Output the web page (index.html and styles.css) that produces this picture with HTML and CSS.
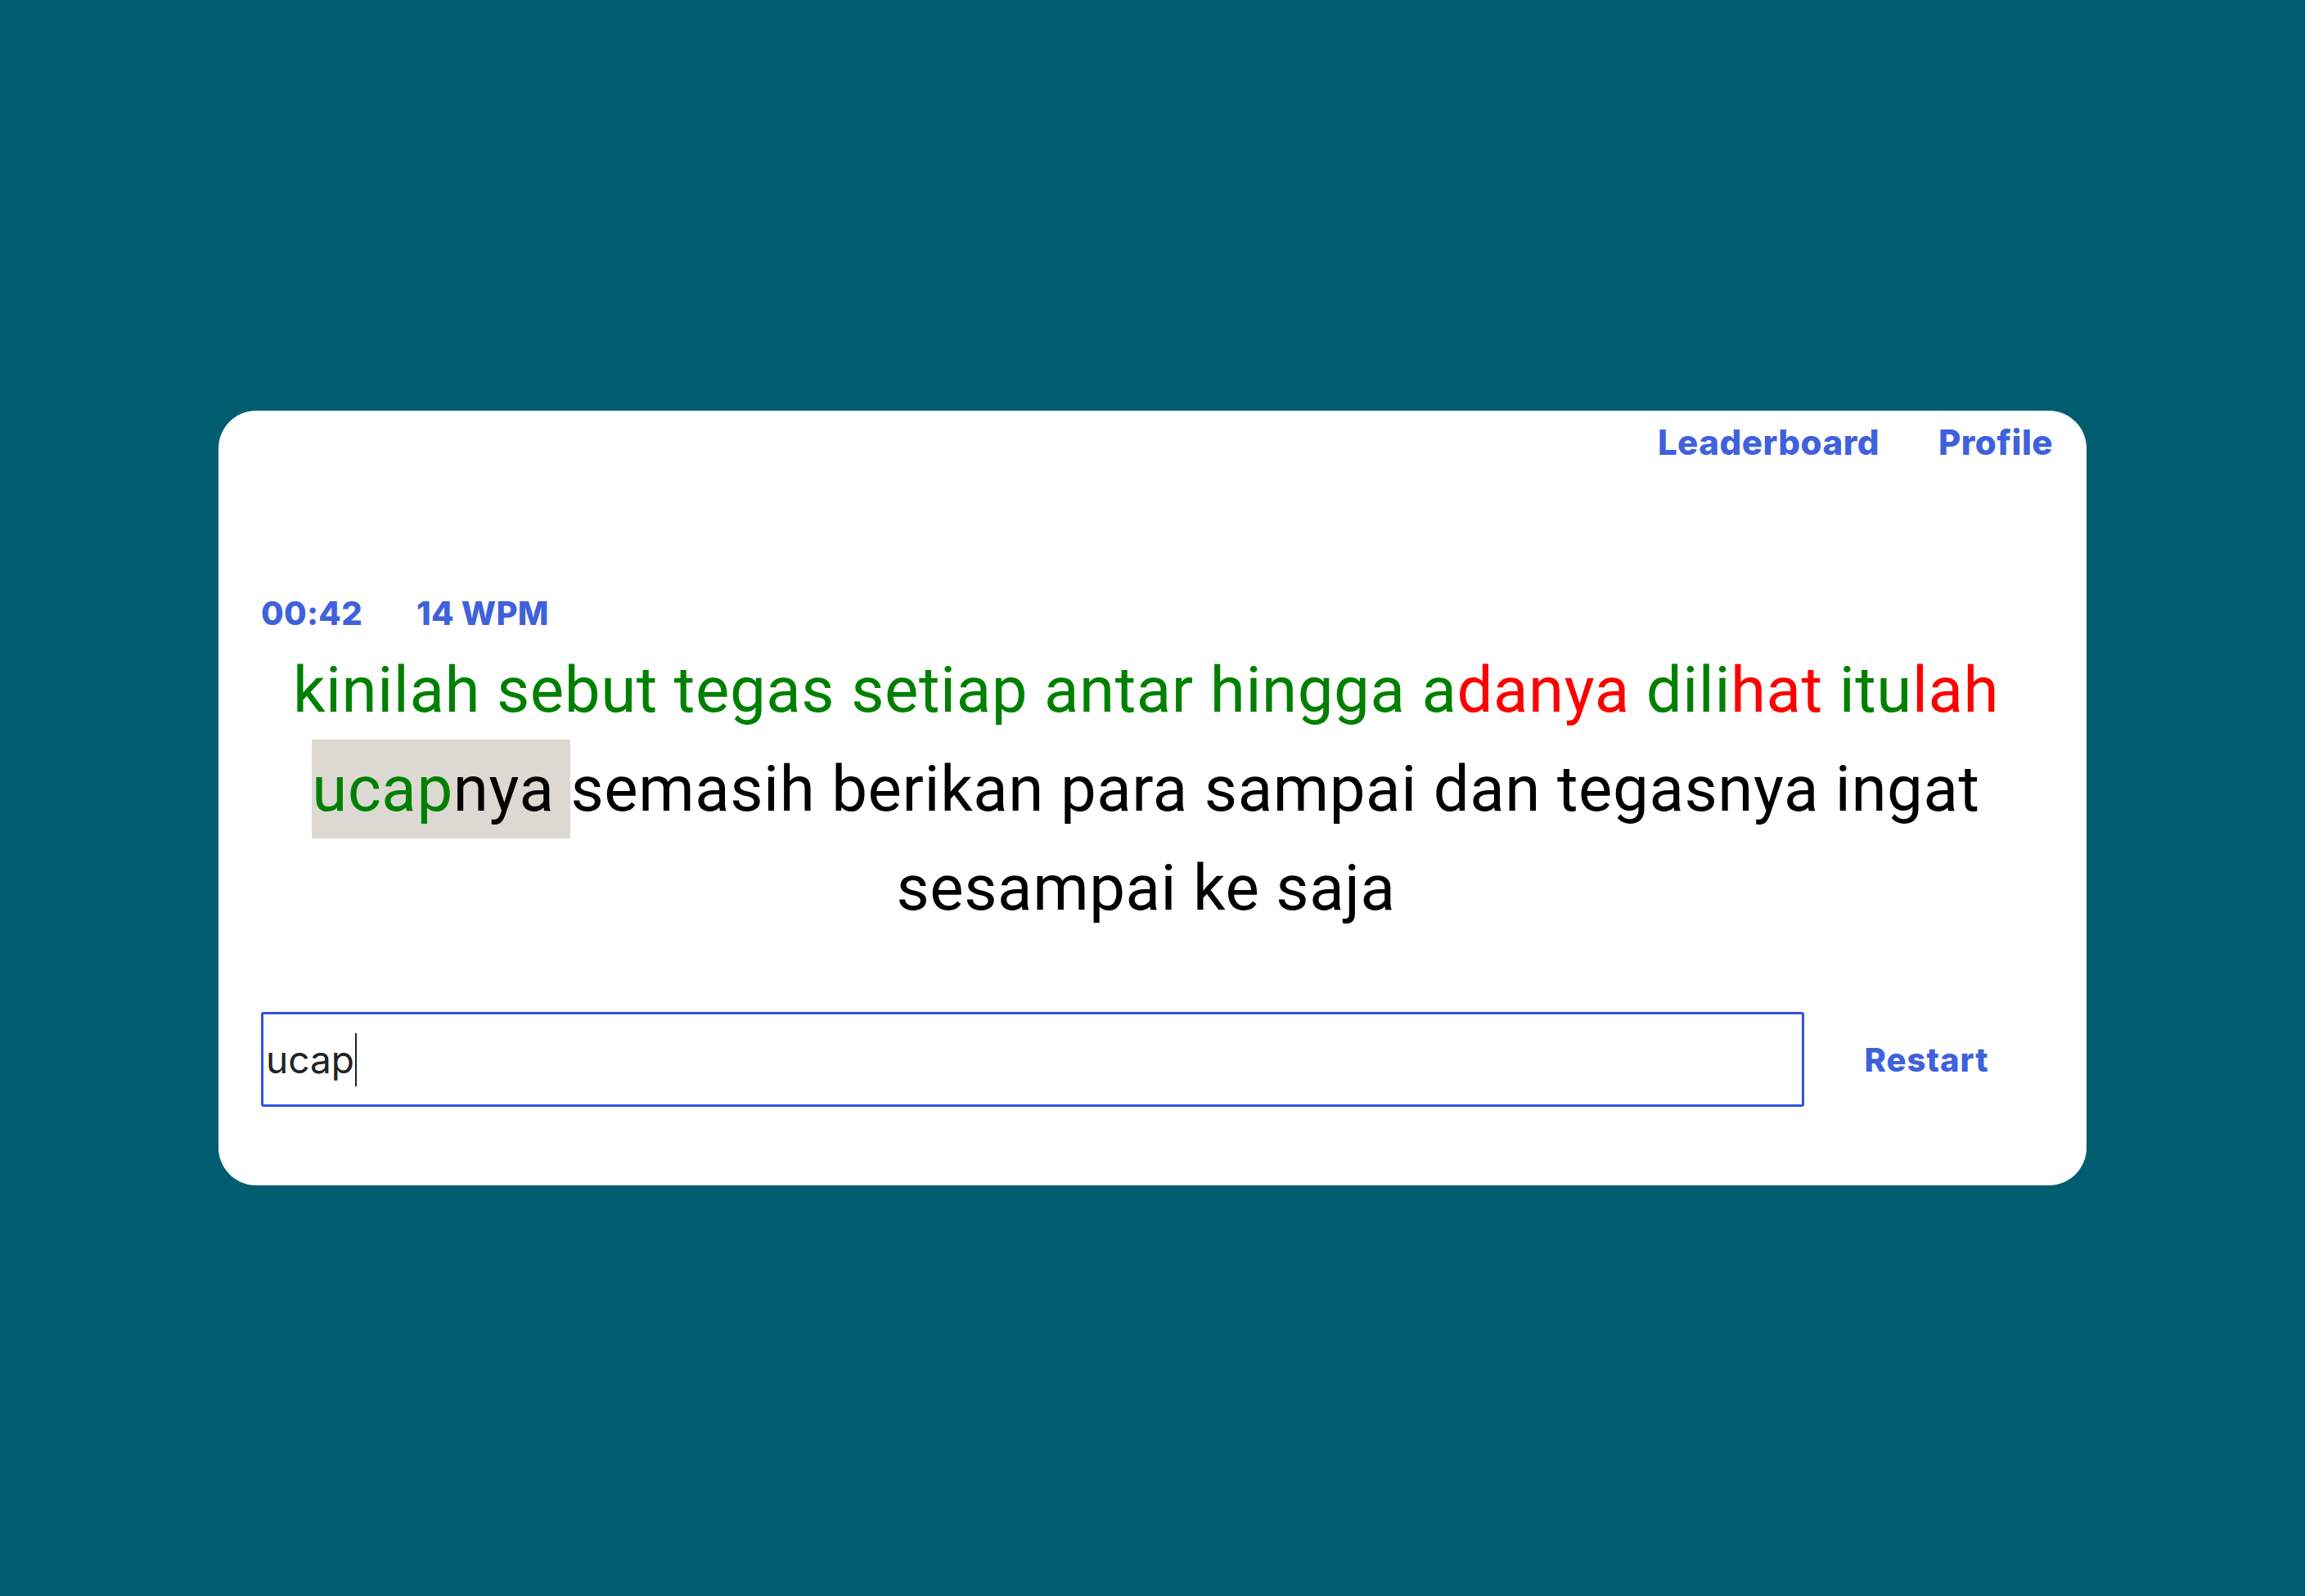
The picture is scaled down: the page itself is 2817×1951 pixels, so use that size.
FILE: index.html
```html
<!DOCTYPE html>
<html lang="id">
<head>
<meta charset="utf-8">
<title>Typing Test</title>
<link rel="stylesheet" href="styles.css">
</head>
<body>
<main class="card">
  <nav class="nav">
    <a class="nav-link" href="#">Leaderboard</a>
    <a class="nav-link" href="#">Profile</a>
  </nav>
  <section class="game">
    <div class="stats">
      <span class="stat">00:42</span>
      <span class="stat">14 WPM</span>
    </div>
    <p class="words"><span class="ok">kinilah sebut tegas setiap antar hingga a</span><span class="bad">danya</span> <span class="ok">dili</span><span class="bad">hat</span> <span class="ok">itu</span><span class="bad">lah</span> <span class="current"><span class="ok">ucap</span>nya&nbsp;</span>semasih berikan para sampai dan tegasnya ingat sesampai ke saja</p>
    <div class="entry">
      <div class="input-box"><span class="typed">ucap</span><span class="caret"></span></div>
      <button class="restart" type="button">Restart</button>
    </div>
  </section>
</main>
</body>
</html>
```
FILE: styles.css
```css
html, body {
  margin: 0;
  padding: 0;
}

body {
  background: #005e70;
  min-height: 100vh;
  display: flex;
  align-items: center;
  justify-content: center;
  font-family: "Inter", "Liberation Sans", sans-serif;
}

.card {
  width: 2283px;
  height: 947px;
  box-sizing: border-box;
  background: #ffffff;
  border-radius: 46px;
  padding: 14px 41px 0 52px;
  display: flex;
  flex-direction: column;
}

.nav {
  display: flex;
  justify-content: flex-end;
  gap: 72px;
  height: 50px;
}

.nav-link {
  color: #3f61dc;
  text-decoration: none;
  font-weight: 800;
  font-size: 42px;
  line-height: 50px;
  letter-spacing: 0.5px;
}

.game {
  margin-top: 159px;
  padding-right: 27px;
  display: flex;
  flex-direction: column;
}

.stats {
  display: flex;
  gap: 66px;
  height: 50px;
}

.stat {
  color: #3f61dc;
  font-weight: 800;
  font-size: 40px;
  line-height: 50px;
  letter-spacing: 0.3px;
}

.words {
  margin: 8px 0 0;
  text-align: center;
  font-family: "Roboto", "Liberation Sans", sans-serif;
  font-size: 78px;
  letter-spacing: 0.6px;
  line-height: 121px;
  color: #000000;
}

.ok {
  color: #008000;
}

.bad {
  color: #ff0000;
}

.current {
  display: inline-block;
  background: #dcd9d3;
  line-height: 121px;
}

.entry {
  margin-top: 91px;
  display: flex;
  align-items: center;
}

.input-box {
  flex: 1;
  height: 116px;
  box-sizing: border-box;
  border: 3px solid #2f55e0;
  border-radius: 3px;
  padding-left: 3px;
  display: flex;
  align-items: center;
  font-family: "Inter", "Liberation Sans", sans-serif;
  font-size: 46px;
  color: #222222;
}

.caret {
  width: 2px;
  height: 65px;
  background: #222222;
  margin-left: 1px;
}

.restart {
  width: 277px;
  box-sizing: border-box;
  padding: 0 0 0 22px;
  background: none;
  border: none;
  color: #3f61dc;
  font-family: "Inter", "Liberation Sans", sans-serif;
  font-weight: 800;
  font-size: 40px;
  letter-spacing: 1px;
  text-align: center;
  cursor: pointer;
}
```
